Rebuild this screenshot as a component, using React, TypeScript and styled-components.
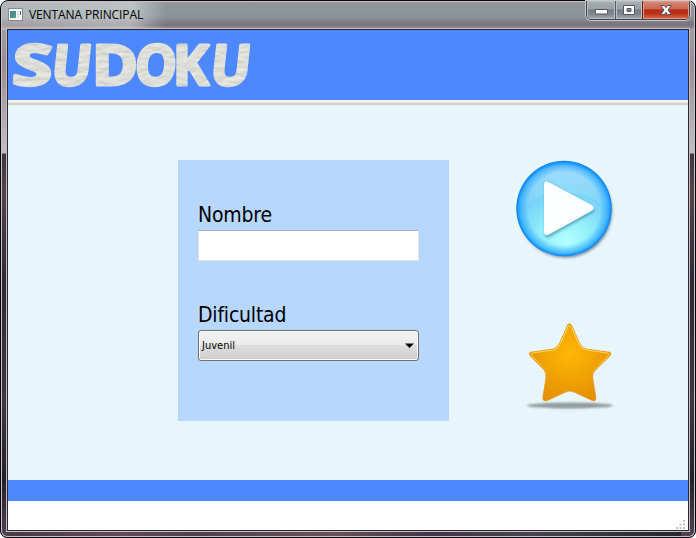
import React from "react";
import styled, { createGlobalStyle } from "styled-components";

const GlobalStyle = createGlobalStyle`
  * { box-sizing: border-box; }
  html, body { margin: 0; overflow: hidden; background: #fff; }
`;

const Frame = styled.div`
  width: 696px;
  height: 538px;
  display: flex;
  flex-direction: column;
  padding: 0 6px 5px;
  border: 1px solid #08080c;
  border-radius: 8px 8px 7px 7px;
  font-family: "Noto Sans", sans-serif;
  box-shadow: inset 0 0 0 1px #c5c3c6;
  background:
    linear-gradient(90deg, rgba(255,255,255,.3) 0, rgba(255,255,255,.42) 130px, rgba(255,255,255,0) 165px) 0 0 / 100% 29px no-repeat,
    linear-gradient(#92989b 0, #899397 16px, #77717a 24px, #a79da6 29px) 0 0 / 100% 29px no-repeat,
    linear-gradient(90deg, transparent 0 8px, #4b3848 8px, #67495f 120px, #514050 190px, #6c5158 330px, #44354a 430px, #4a4550 530px, #252632 680px, transparent 680px) 0 100% / 100% 7px no-repeat,
    linear-gradient(#a59ca5 29px, #988c98 60px, #aaa0a7 100px, #c5bcc0 152px, #40343f 153px, #584348 190px, #302835 280px, #3f3844 400px, #20212c 480px, #584353 538px);
`;

const TitleBar = styled.header`
  height: 28px;
  flex: none;
  display: flex;
  align-items: flex-start;
  justify-content: space-between;
`;

const Caption = styled.div`
  display: flex;
  align-items: center;
  gap: 6px;
  padding: 7px 0 0 1px;
  height: 20px;
`;

const Title = styled.span`
  font-family: "Open Sans", sans-serif;
  font-size: 12px;
  line-height: 14px;
  letter-spacing: -0.1px;
  color: #000;
  white-space: nowrap;
`;

const Controls = styled.div`
  display: flex;
  height: 19px;
  margin-right: -1px;
  border: 1px solid #3f4348;
  border-top: 0;
  border-radius: 0 0 5px 5px;
  overflow: hidden;
  box-shadow: 0 0 0 1px #c8c8ca;
`;

const ControlButton = styled.button<{ $w: number; $close?: boolean }>`
  width: ${(p) => p.$w}px;
  padding: 0;
  display: flex;
  align-items: center;
  justify-content: center;
  border: 0;
  border-left: 1px solid ${(p) => (p.$close ? "#602019" : "#545b60")};
  box-shadow: inset 0 0 0 1px ${(p) => (p.$close ? "#e39a88" : "#b9bfc2")};
  background: ${(p) =>
    p.$close
      ? "linear-gradient(#d78b7b 0, #ca654f 46%, #b22d16 48%, #b83119 70%, #dc704e)"
      : "linear-gradient(#a8afb3 0, #9aa1a6 46%, #767f86 48%, #818990 75%, #a4aaaf)"};
  &:first-child { border-left: 0; }
  svg { display: block; margin-top: ${(p) => (p.$w === 28 ? 4 : 1)}px; }
`;

const Client = styled.main`
  width: 682px;
  height: 502px;
  flex: none;
  display: flex;
  flex-direction: column;
  border: 1px solid #29262d;
  box-shadow: 0 0 0 1px #c3bfc2;
  background: #fff;
`;

const Banner = styled.div`
  height: 70px;
  flex: none;
  background: #4e88ff;
  svg { display: block; overflow: visible; }
`;

const Divider = styled.div`
  height: 6px;
  flex: none;
  background: linear-gradient(#f7f7f5 0 1px, #eeeeec 1px 3px, #cfcfcf 3px 5px, #e9f1f3 5px);
`;

const Body = styled.div`
  height: 374px;
  flex: none;
  display: flex;
  align-items: flex-start;
  padding: 54px 0 0 170px;
  background: #e8f6fc;
`;

const Panel = styled.form`
  width: 271px;
  height: 261px;
  padding: 41px 30px 0 20px;
  background: #b8d7ff;
`;

const Field = styled.div`
  height: 100px;
`;

const Label = styled.label`
  display: block;
  height: 29px;
  font-family: "DejaVu Sans Condensed", "DejaVu Sans", sans-serif;
  font-stretch: condensed;
  font-size: 21px;
  line-height: 28px;
  letter-spacing: -0.2px;
  color: #000;
`;

const TextInput = styled.input`
  display: block;
  width: 221px;
  height: 31px;
  border: 1px solid #e0e5ec;
  border-top-color: #abadb3;
  background: #fff;
  outline: 0;
`;

const Combo = styled.button`
  width: 221px;
  height: 31px;
  display: flex;
  align-items: center;
  justify-content: space-between;
  padding: 1px 4px 0 3px;
  border: 1px solid #707070;
  border-radius: 3px;
  box-shadow: inset 0 0 0 1px #fafafa;
  background: linear-gradient(#f2f2f2 0, #ebebeb 49%, #dddddd 50%, #cfcfcf);
  font-family: "DejaVu Sans Condensed", "DejaVu Sans", sans-serif;
  font-stretch: condensed;
  font-size: 11px;
  line-height: 14px;
  color: #000;
`;

const Actions = styled.nav`
  display: flex;
  flex-direction: column;
  gap: 60px;
  margin-left: 65px;
`;

const ActionButton = styled.button`
  display: block;
  width: 102px;
  height: 102px;
  padding: 0;
  border: 0;
  background: none;
  svg { display: block; }
`;

const FooterBand = styled.div`
  height: 21px;
  flex: none;
  background: #4e88ff;
`;

const StatusBar = styled.footer`
  height: 29px;
  display: flex;
  align-items: flex-end;
  justify-content: flex-end;
  padding: 0 2px 0 0;
  background: #fff;
`;

const logoLetters = [
  { ch: "S", x: 11.5, w: 40, skew: -3 },
  { ch: "U", x: 50, w: 40, skew: -6 },
  { ch: "D", x: 92, w: 46, skew: 0 },
  { ch: "O", x: 134, w: 42, skew: -3 },
  { ch: "K", x: 173, w: 36, skew: 0 },
  { ch: "U", x: 209, w: 40, skew: -6 },
];

const Logo = () => (
  <svg width="250" height="70" viewBox="0 0 250 70" aria-label="SUDOKU">
    <defs>
      <filter id="paper" x="0" y="0" width="250" height="70" filterUnits="userSpaceOnUse" colorInterpolationFilters="sRGB">
        <feTurbulence type="fractalNoise" baseFrequency="0.08 0.2" numOctaves="3" seed="4" result="n" />
        <feDiffuseLighting in="n" surfaceScale="0.5" lightingColor="#f2f2ec" result="l">
          <feDistantLight azimuth="250" elevation="67" />
        </feDiffuseLighting>
        <feComposite in="l" in2="SourceGraphic" operator="in" />
      </filter>
    </defs>
    <g
      filter="url(#paper)"
      fontFamily="Open Sans"
      fontWeight="700"
      fontSize="56"
      fill="#dcddda"
      stroke="#dcddda"
      strokeWidth="3.2"
      strokeLinejoin="round"
    >
      {logoLetters.map((l, i) => (
        <text
          key={i}
          transform={`translate(${l.x - 8} 55) skewX(${l.skew})`}
          textLength={l.w}
          lengthAdjust="spacingAndGlyphs"
        >
          {l.ch}
        </text>
      ))}
    </g>
  </svg>
);

const AppIcon = () => (
  <svg width="15" height="13" viewBox="0 0 15 13">
    <defs>
      <linearGradient id="app" x2="1" y2="1">
        <stop stopColor="#4b79a8" />
        <stop offset="1" stopColor="#55a678" />
      </linearGradient>
    </defs>
    <rect x=".5" y=".5" width="14" height="12" fill="#f7f7f7" stroke="#858b90" />
    <rect x="2" y="3" width="6" height="7" fill="url(#app)" />
    <path d="M9 3h2v7H9z" fill="#e2e5e8" />
    <path d="M12.5 3v4" stroke="#3d6b9c" />
  </svg>
);

const PlayIcon = () => (
  <svg width="102" height="102" viewBox="0 0 102 102">
    <defs>
      <radialGradient id="orb" cx=".52" cy=".85" r=".85">
        <stop stopColor="#b2ffff" />
        <stop offset=".32" stopColor="#94effa" />
        <stop offset=".62" stopColor="#79d3f8" />
        <stop offset="1" stopColor="#65bff9" />
      </radialGradient>
      <radialGradient id="rim">
        <stop offset=".76" stopColor="#169dff" stopOpacity="0" />
        <stop offset=".93" stopColor="#169dff" stopOpacity=".65" />
        <stop offset="1" stopColor="#087cf0" />
      </radialGradient>
      <linearGradient id="gloss" x2="0" y2="1">
        <stop stopColor="#d5f3ff" stopOpacity=".55" />
        <stop offset="1" stopColor="#c0f0ff" stopOpacity=".1" />
      </linearGradient>
      <filter id="soft" x="-20%" y="-20%" width="140%" height="140%">
        <feGaussianBlur stdDeviation="1.4" />
      </filter>
    </defs>
    <circle cx="51.5" cy="51" r="46.500" fill="#32495a" opacity=".65" filter="url(#soft)" />
    <circle cx="50" cy="48.5" r="47.5" fill="url(#orb)" />
    <path d="M7 46C8 20 26 5 50 5s42 16 43 41C75 36 65 33 50 33S21 37 7 46Z" fill="url(#gloss)" />
    <circle cx="50" cy="48.5" r="47.7" fill="url(#rim)" />
    <path d="M34 22l43 24q5 3 0 6L34 76q-4 2-4-3V25q0-5 4-3z" fill="#287f9b" opacity=".65" filter="url(#soft)" transform="translate(1 1)" />
    <path d="M34.5 22l43 23q5 3 0 6L35 74.5q-5 2-5-3V25q0-5 4.5-3z" fill="#fcffff" />
  </svg>
);

const starPath =
  "M52.5 2q2-2 4 1l8 18q2 5 7 6l22 3q5 0 2 4L80 49q-3 3-2 8l3 18q1 6-4 4l-17-8q-6-3-11 0l-17 8q-6 2-5-4l3-18q1-5-2-9L14 34q-3-4 2-4l21-3q5-1 7-6z";

const StarIcon = () => (
  <svg width="102" height="102" viewBox="-1.5 -0.5 102 102">
    <defs>
      <radialGradient id="gold" cx=".5" cy=".38" r=".65">
        <stop stopColor="#fdb804" />
        <stop offset="1" stopColor="#e48f05" />
      </radialGradient>
      <linearGradient id="shine" x2="0" y2="1">
        <stop stopColor="#ffe77c" />
        <stop offset=".48" stopColor="#ffd35b" />
        <stop offset=".65" stopColor="#ffc73b" stopOpacity="0" />
      </linearGradient>
      <filter id="shade" x="-10%" y="-80%" width="120%" height="260%">
        <feGaussianBlur stdDeviation="1.2" />
      </filter>
    </defs>
    <ellipse cx="54.5" cy="83" rx="43" ry="3" fill="#777d80" opacity=".75" filter="url(#shade)" />
    <g transform="translate(1.2 0) scale(.975 .985)">
      <path d={starPath} fill="url(#gold)" stroke="#e3920c" strokeWidth=".8" />
      <path d={starPath} fill="none" stroke="url(#shine)" strokeWidth="1" transform="translate(2.7 2.2) scale(.95)" />
    </g>
  </svg>
);

export default function App() {
  return (
    <>
      <GlobalStyle />
      <Frame>
        <TitleBar>
          <Caption>
            <AppIcon />
            <Title>VENTANA PRINCIPAL</Title>
          </Caption>
          <Controls>
            <ControlButton $w={28} aria-label="Minimizar">
              <svg width="13" height="6"><rect x=".5" y=".5" width="12" height="4.5" rx=".5" fill="#fff" stroke="#535666" /></svg>
            </ControlButton>
            <ControlButton $w={27} aria-label="Maximizar">
              <svg width="12" height="11"><path d="M.5.5h11v9H.5zM4 3.5v3h4v-3z" fill="#fff" fillRule="evenodd" stroke="#535666" /></svg>
            </ControlButton>
            <ControlButton $w={47} $close aria-label="Cerrar">
              <svg width="12" height="11"><path d="M.7.5h3.6L6 2.7 7.7.5h3.6L8 5l3.3 4.5H7.7L6 7.3 4.3 9.5H.7L4 5z" fill="#fff" stroke="#535666" /></svg>
            </ControlButton>
          </Controls>
        </TitleBar>
        <Client>
          <Banner><Logo /></Banner>
          <Divider />
          <Body>
            <Panel onSubmit={(e) => e.preventDefault()}>
              <Field>
                <Label htmlFor="nombre">Nombre</Label>
                <TextInput id="nombre" />
              </Field>
              <Field>
                <Label htmlFor="dificultad">Dificultad</Label>
                <Combo id="dificultad" type="button">
                  Juvenil
                  <svg width="9" height="6"><path d="M0 .5h9L4.5 5z" /></svg>
                </Combo>
              </Field>
            </Panel>
            <Actions>
              <ActionButton aria-label="Jugar"><PlayIcon /></ActionButton>
              <ActionButton aria-label="Puntuaciones"><StarIcon /></ActionButton>
            </Actions>
          </Body>
          <FooterBand />
          <StatusBar>
            <svg width="10" height="10" fill="#c4c4c4">
              <path d="M7 0h2v2H7zM7 3.5h2v2H7zM7 7h2v2H7zM3.5 3.5h2v2h-2zM3.5 7h2v2h-2zM0 7h2v2H0z" />
            </svg>
          </StatusBar>
        </Client>
      </Frame>
    </>
  );
}
